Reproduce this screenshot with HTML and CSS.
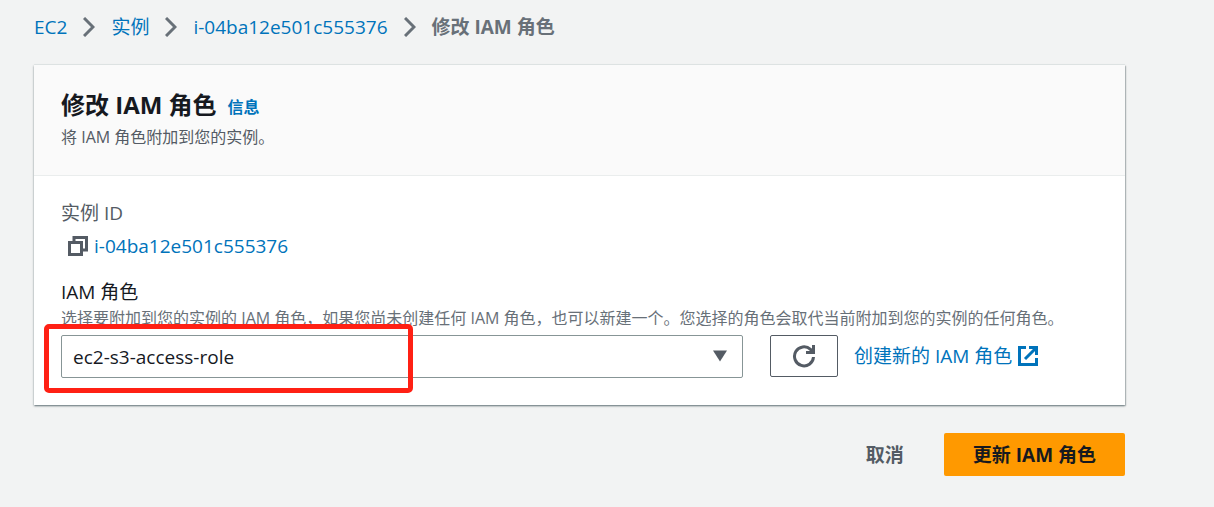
FILE: index.html
```html
<!DOCTYPE html>
<html lang="zh-CN">
<head>
<meta charset="utf-8">
<title>修改 IAM 角色</title>
<link rel="stylesheet" href="styles.css">
</head>
<body>
<main class="page">
  <nav class="breadcrumb" aria-label="breadcrumb">
    <a href="#">EC2</a>
    <svg class="chevron" viewBox="0 0 12 20"><path d="M1 1l9 9-9 9"/></svg>
    <a href="#">实例</a>
    <svg class="chevron" viewBox="0 0 12 20"><path d="M1 1l9 9-9 9"/></svg>
    <a href="#">i-04ba12e501c555376</a>
    <svg class="chevron" viewBox="0 0 12 20"><path d="M1 1l9 9-9 9"/></svg>
    <span class="current">修改 IAM 角色</span>
  </nav>

  <section class="card">
    <header class="card-header">
      <div class="title-row">
        <h1>修改 IAM 角色</h1>
        <a class="info" href="#">信息</a>
      </div>
      <p class="description">将 IAM 角色附加到您的实例。</p>
    </header>
    <div class="card-body">
      <div class="field-name">实例 ID</div>
      <div class="instance">
        <button class="copy" type="button" aria-label="复制">
          <svg viewBox="0 0 20 20"><path d="M1.500 6.500h12v12h-12zM6 6V1.500h12.500v12.500H14"/></svg>
        </button>
        <a href="#">i-04ba12e501c555376</a>
      </div>
      <label class="role-label" for="role">IAM 角色</label>
      <p class="hint">选择要附加到您的实例的 IAM 角色，如果您尚未创建任何 IAM 角色，也可以新建一个。您选择的角色会取代当前附加到您的实例的任何角色。</p>
      <div class="role-row">
        <div class="select-wrap">
          <select id="role"><option>ec2-s3-access-role</option></select>
          <svg class="caret" viewBox="0 0 14 12"><path d="M0 0.500h14L7 11.500z"/></svg>
          <span class="highlight"></span>
        </div>
        <button class="refresh" type="button" aria-label="刷新">
          <svg viewBox="0 0 24 24"><path d="M21.500 13a9.500 9.500 0 1 1-3-7.600l2.500 2.500"/><path d="M21.500 1v7.500H14"/></svg>
        </button>
        <a class="create" href="#">创建新的 IAM 角色
          <svg viewBox="0 0 20 20"><path d="M8 1.500H1.500v17h17V12M11 1.500h7.500V9M18 2L7 13"/></svg>
        </a>
      </div>
    </div>
  </section>

  <div class="actions">
    <button class="cancel" type="button">取消</button>
    <button class="primary" type="button">更新 IAM 角色</button>
  </div>
</main>
</body>
</html>
```

FILE: styles.css
```css
* { box-sizing: border-box; }
body {
  margin: 0;
  background: #f2f3f3;
  color: #16191f;
  font: 19px/28px "Open Sans", "Noto Sans CJK SC", sans-serif;
}
h1, p { margin: 0; }
a { color: #0073bb; text-decoration: none; }
button, select { font: inherit; color: inherit; cursor: pointer; }
svg { display: block; fill: none; }

.page { padding: 13px 89px 31px 34px; }

.breadcrumb { display: flex; align-items: center; gap: 16px; }
.chevron {
  width: 12px;
  height: 20px;
  stroke: #687078;
  stroke-width: 3;
}
.current { color: #687078; font-weight: 700; }

.card {
  margin-top: 24px;
  background: #fff;
  box-shadow: 0 1px 2px #001c2480, 1px 1px 1px #001c2426, 0 -1px 0 #e6eaea;
}
.card-header {
  padding: 21px 27px 25px;
  background: #fafafa;
  border-bottom: 1px solid #eaeded;
}
.title-row { display: flex; align-items: center; gap: 11px; }
h1 { font-size: 24px; line-height: 38px; }
.info { margin-top: 4px; font-size: 16px; line-height: 24px; font-weight: 700; }
.description { color: #545b64; font-size: 16px; line-height: 26px; }

.card-body { padding: 23px 27px 27px; }
.field-name { color: #545b64; }
.instance { display: flex; align-items: center; gap: 6px; padding: 5px 0 0 7px; }
.copy { padding: 0; border: 0; background: none; }
.copy svg { width: 20px; height: 20px; stroke: #545b64; stroke-width: 3; }
.role-label { display: block; margin-top: 18px; }
.hint { color: #687078; font-size: 16px; line-height: 24px; white-space: nowrap; }

.role-row { display: flex; align-items: flex-start; margin-top: 5px; }
.select-wrap { position: relative; flex: 0 1 682px; }
select {
  display: block;
  width: 100%;
  height: 43px;
  padding: 0 40px 0 11px;
  border: 1px solid #879596;
  border-radius: 2px;
  background: #fff;
  appearance: none;
}
.caret {
  position: absolute;
  top: 15px;
  right: 16px;
  width: 14px;
  height: 12px;
  fill: #545b64;
  pointer-events: none;
}
.highlight {
  position: absolute;
  top: -11px;
  left: -17px;
  width: 369px;
  height: 69px;
  border: 5px solid #ff2014;
  border-radius: 5px;
  pointer-events: none;
}
.refresh {
  display: grid;
  place-items: center;
  width: 68px;
  height: 42px;
  margin: 0 16px 0 27px;
  padding: 0;
  border: 1px solid #545b64;
  border-radius: 2px;
  background: #fff;
}
.refresh svg { width: 24px; height: 24px; stroke: #545b64; stroke-width: 3; }
.create { display: flex; align-items: center; gap: 6px; height: 42px; white-space: nowrap; }
.create svg { width: 20px; height: 20px; stroke: #0073bb; stroke-width: 3; }

.actions { display: flex; justify-content: flex-end; gap: 11px; margin-top: 28px; }
.actions button {
  height: 43px;
  padding: 0 29px;
  border: 0;
  border-radius: 2px;
  font-weight: 700;
}
.cancel { background: none; color: #545b64; }
.primary { background: #f90; }
```
